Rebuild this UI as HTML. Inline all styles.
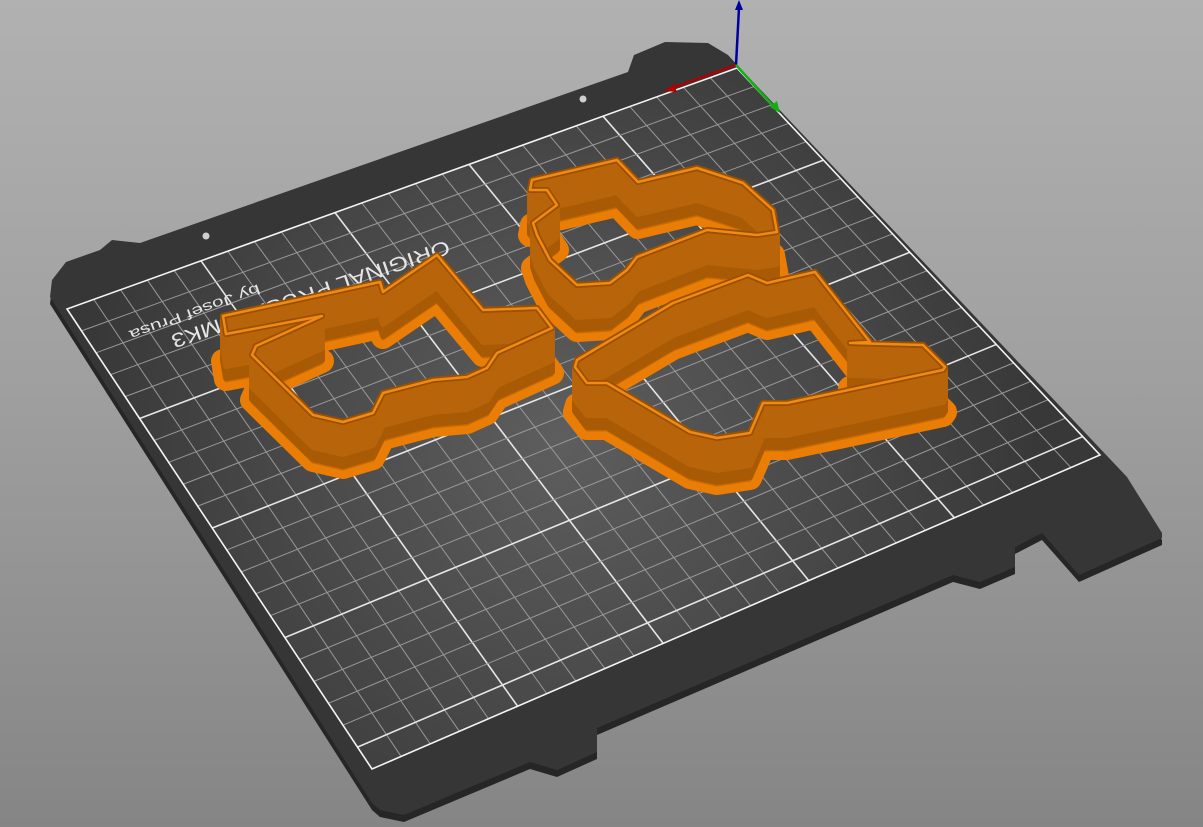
<!DOCTYPE html>
<html><head><meta charset="utf-8"><style>
html,body{margin:0;padding:0;width:1203px;height:827px;overflow:hidden}
body{background:linear-gradient(180deg,#b1b1b1 0%,#a0a0a0 45%,#858585 100%)}
svg{position:absolute;left:0;top:0}
</style></head><body>
<svg id="s" width="1203" height="827" viewBox="0 0 1203 827" xmlns="http://www.w3.org/2000/svg">
<defs>
<radialGradient id="sheet" cx="560" cy="440" r="480" gradientUnits="userSpaceOnUse">
<stop offset="0" stop-color="#5e5e5e"/><stop offset="1" stop-color="#383838"/></radialGradient>
<path id="o1" d="M223,316 L380,282 L383,292 L437,255 L483,310 L537,308 L552,328 L497,353 L487,368 L467,377 L433,380 L383,393 L373,413 L343,422 L313,415 L252,355 L256,346 L322,316 L226,334 Z"/>
<path id="o2" d="M532,180 L617,160 L638,182 L697,168 L743,183 L773,210 L777,232 L757,235 L707,230 L637,257 L627,270 L610,283 L577,285 L550,260 L537,235 L533,223 L557,205 L547,190 L530,190 Z"/>
<path id="o3" d="M577,360 L673,303 L748,275 L767,283 L815,272 L870,342 L850,343 L923,345 L945,367 L943,370 L787,403 L763,403 L750,433 L717,438 L690,432 L607,383 L587,383 L575,367 Z"/>
</defs>
<polygon fill="#262626" points="50,304 52,287 66,269 100,257 112,247 140,250 628,79 1127,484 1162,540 1162,545 1079,582 1042,540 1015,554 1015,574 980,589 953,582 597,735 597,759 557,777 530,769 404,822 380,817 372,810"/>
<polygon fill="#363636" points="50,297 52,280 66,262 100,250 112,240 140,243 628,72 634,55 665,42 708,43 728,55 739,67 1127,477 1162,533 1162,538 1079,575 1042,533 1015,547 1015,567 980,582 953,575 597,728 597,752 557,770 530,762 404,815 380,810 372,803"/>
<circle cx="206" cy="236" r="3.5" fill="#cfcfcf"/>
<circle cx="583" cy="99" r="3.5" fill="#cfcfcf"/>
<polygon fill="url(#sheet)" points="737,68 67,309 372,769 1100,455"/>
<g id="grid"></g>
<polygon fill="none" stroke="#f4f4f4" stroke-width="1.6" points="737,68 67,309 372,769 1100,455"/>
<g fill="#e6e6e6" font-family="Liberation Sans, sans-serif">
<text x="0" y="0" font-size="20" textLength="293" lengthAdjust="spacingAndGlyphs" transform="translate(447,240) rotate(161)">ORIGINAL PRUSA i3 MK3</text>
<text x="0" y="0" font-size="14" textLength="138" lengthAdjust="spacingAndGlyphs" transform="translate(258,284) rotate(160)">by Josef Prusa</text>
</g>
<g id="objs"></g>
<line x1="736" y1="65" x2="739" y2="8" stroke="#0000a0" stroke-width="2.5"/>
<polygon points="739,0 735,10 743,10" fill="#0000a0"/>
<line x1="736" y1="65" x2="672" y2="88" stroke="#b00000" stroke-width="2.5"/>
<polygon points="664,91 674,84 677,92" fill="#b00000"/>
<line x1="736" y1="65" x2="774" y2="107" stroke="#10b010" stroke-width="2.5"/>
<polygon points="780,113 770,107 777,101" fill="#10b010"/>
</svg>
<script>
var TR=[737,68],TL=[67,309],BR=[1100,455],BL=[372,769];
function P(u,v){return [(1-u)*(1-v)*TR[0]+u*(1-v)*TL[0]+(1-u)*v*BR[0]+u*v*BL[0],(1-u)*(1-v)*TR[1]+u*(1-v)*TL[1]+(1-u)*v*BR[1]+u*v*BL[1]];}
var g=document.getElementById('grid'),h='';
function ln(a,b,maj){h+='<line x1="'+a[0]+'" y1="'+a[1]+'" x2="'+b[0]+'" y2="'+b[1]+'" stroke="'+(maj?'#e6e6e6':'#999999')+'" stroke-width="'+(maj?1.6:1)+'"/>';}
for(var i=1;i<25;i++){var u=i/25;ln(P(u,0),P(u,1),i%5==0);}
for(var j=1;j<21;j++){var v=j/21;ln(P(0,v),P(1,v),j%5==0);}
g.innerHTML=h;
var o=document.getElementById('objs'),s='';
['o2','o1','o3'].forEach(function(id){
 s+='<use href="#'+id+'" transform="translate(0,45)" fill="none" stroke="#e97d05" stroke-width="24" stroke-linejoin="round"/>';
 s+='<use href="#'+id+'" transform="translate(0,47)" fill="none" stroke="#c76a00" stroke-width="3" stroke-linejoin="round"/>';
 for(var d=44;d>=0;d-=2){var c=d>32?'#a95a04':'#b8640a';s+='<use href="#'+id+'" transform="translate(0,'+d+')" fill="none" stroke="'+c+'" stroke-width="6" stroke-linejoin="round"/>';}
 s+='<use href="#'+id+'" fill="none" stroke="#9a5000" stroke-width="6" stroke-linejoin="round"/>';
 s+='<use href="#'+id+'" fill="none" stroke="#f08a12" stroke-width="2.5" stroke-linejoin="round"/>';
});
o.innerHTML=s;
</script>
</body></html>
